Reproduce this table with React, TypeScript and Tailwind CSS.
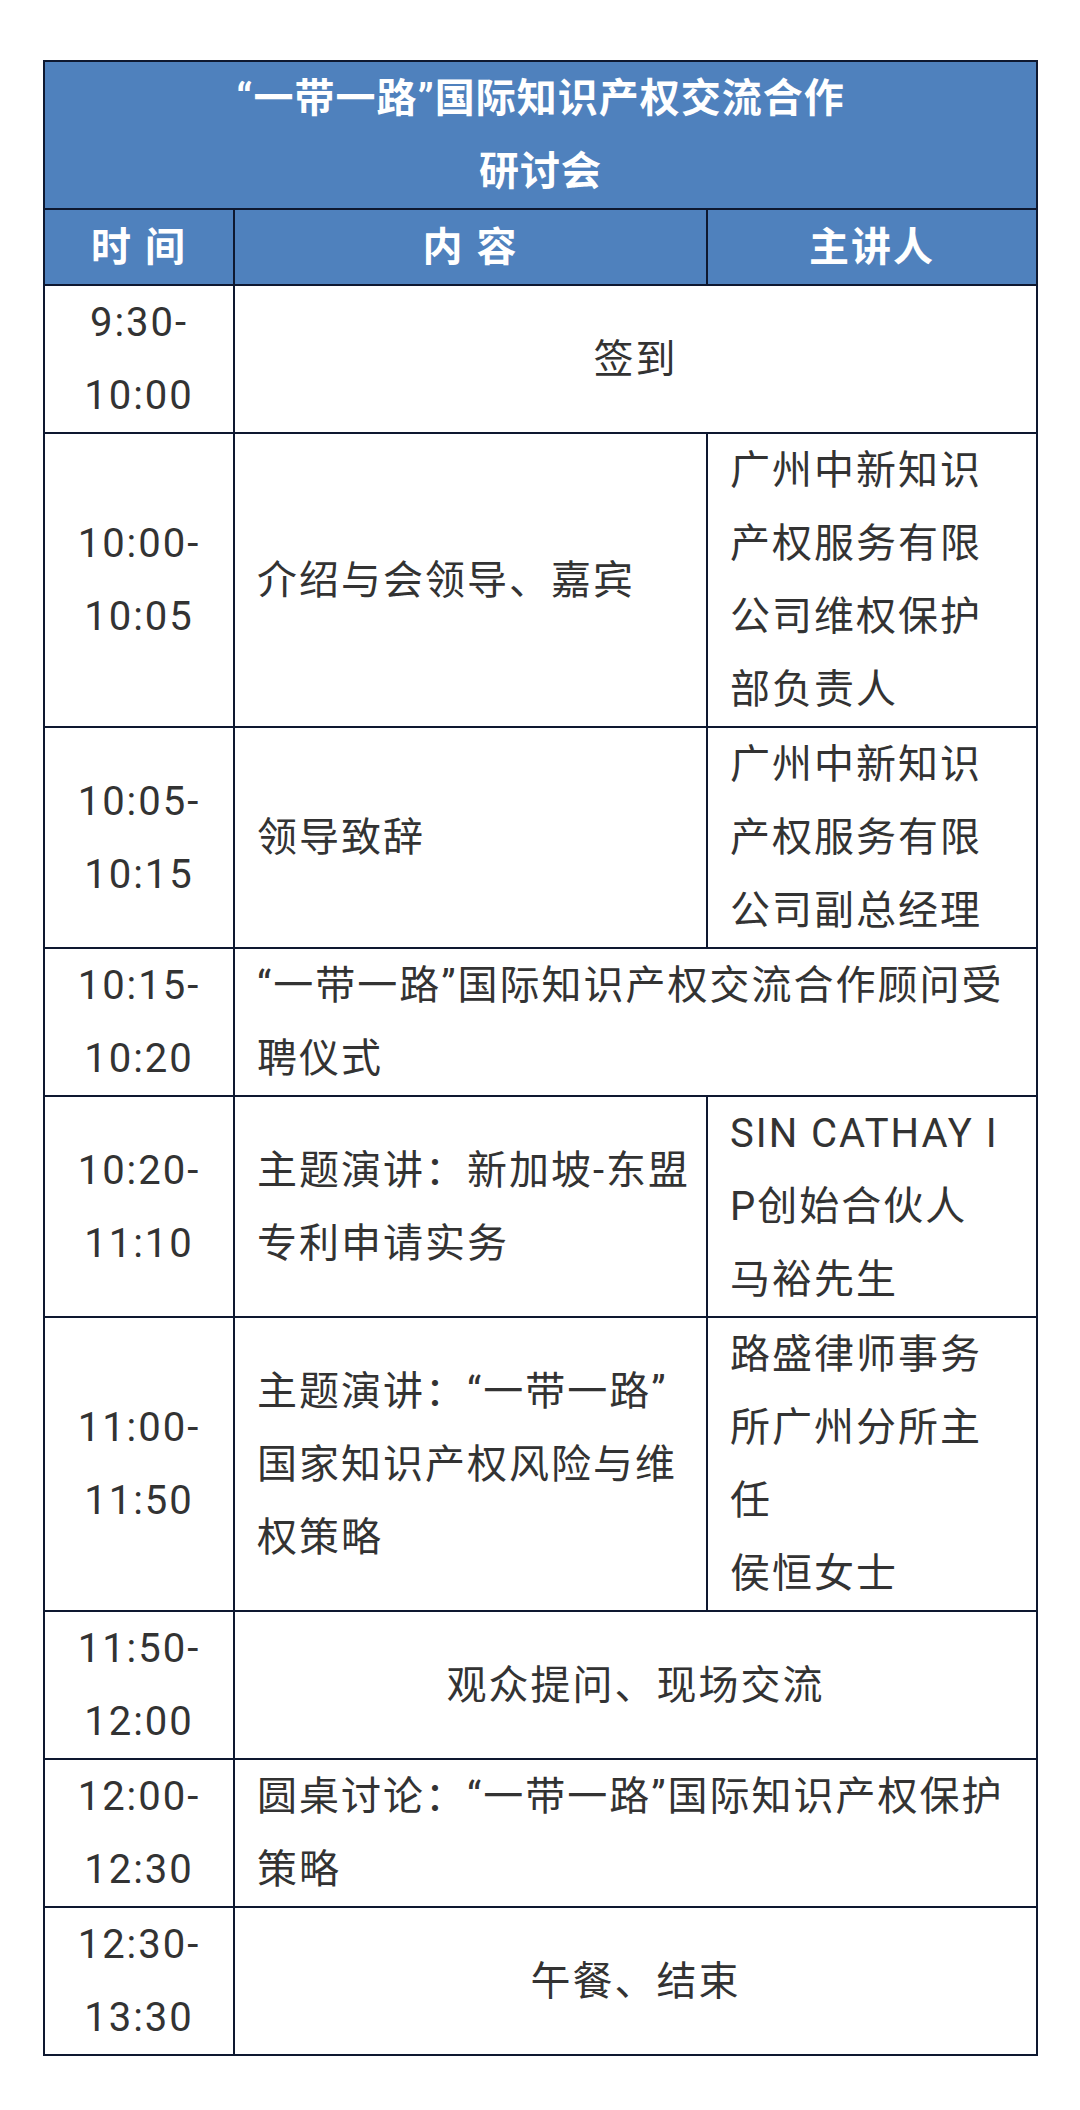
import React from "react";

const cell = "border-2 border-[#0e1830] p-0";
const mid = `${cell} pl-[22px] pr-[10px] [line-break:anywhere]`;
const font = { fontFamily: 'Roboto, "Noto Sans CJK SC", sans-serif' };

export default function App() {
  return (
    <div className="min-h-[2110px] w-[1080px] bg-white pt-[60px]" style={font}>
      <table className="ml-[43px] w-[993px] table-fixed border-collapse text-[40px] leading-[73px] tracking-[2px] text-[#333333]">
        <colgroup>
          <col className="w-[190px]" />
          <col className="w-[473px]" />
          <col className="w-[330px]" />
        </colgroup>
        <thead>
          <tr className="bg-[#4f81bd] font-bold text-white">
            <th colSpan={3} className={`${cell} text-center tracking-[1px]`}>
              “一带一路”国际知识产权交流合作
              <br />
              研讨会
            </th>
          </tr>
          <tr className="bg-[#4f81bd] font-bold text-white">
            <th className={`${cell} h-[76px] text-center`}>时 间</th>
            <th className={`${cell} text-center`}>内 容</th>
            <th className={`${cell} text-center`}>主讲人</th>
          </tr>
        </thead>
        <tbody>
          <tr>
            <td className={`${cell} text-center`}>9:30-<br />10:00</td>
            <td colSpan={2} className={`${cell} text-center`}>签到</td>
          </tr>
          <tr>
            <td className={`${cell} text-center`}>10:00-<br />10:05</td>
            <td className={mid}>介绍与会领导、嘉宾</td>
            <td className={`${cell} break-all px-[22px]`}>广州中新知识产权服务有限公司维权保护部负责人</td>
          </tr>
          <tr>
            <td className={`${cell} text-center`}>10:05-<br />10:15</td>
            <td className={mid}>领导致辞</td>
            <td className={`${cell} break-all px-[22px]`}>广州中新知识产权服务有限公司副总经理</td>
          </tr>
          <tr>
            <td className={`${cell} text-center`}>10:15-<br />10:20</td>
            <td colSpan={2} className={mid}>“一带一路”国际知识产权交流合作顾问受聘仪式</td>
          </tr>
          <tr>
            <td className={`${cell} text-center`}>10:20-<br />11:10</td>
            <td className={mid}>主题演讲：新加坡-东盟专利申请实务</td>
            <td className={`${cell} break-all px-[22px]`}>SIN CATHAY IP创始合伙人<br />马裕先生</td>
          </tr>
          <tr>
            <td className={`${cell} text-center`}>11:00-<br />11:50</td>
            <td className={mid}>主题演讲：“一带一路”国家知识产权风险与维权策略</td>
            <td className={`${cell} break-all px-[22px]`}>路盛律师事务所广州分所主任<br />侯恒女士</td>
          </tr>
          <tr>
            <td className={`${cell} text-center`}>11:50-<br />12:00</td>
            <td colSpan={2} className={`${cell} text-center`}>观众提问、现场交流</td>
          </tr>
          <tr>
            <td className={`${cell} text-center`}>12:00-<br />12:30</td>
            <td colSpan={2} className={mid}>圆桌讨论：“一带一路”国际知识产权保护策略</td>
          </tr>
          <tr>
            <td className={`${cell} text-center`}>12:30-<br />13:30</td>
            <td colSpan={2} className={`${cell} text-center`}>午餐、结束</td>
          </tr>
        </tbody>
      </table>
    </div>
  );
}
